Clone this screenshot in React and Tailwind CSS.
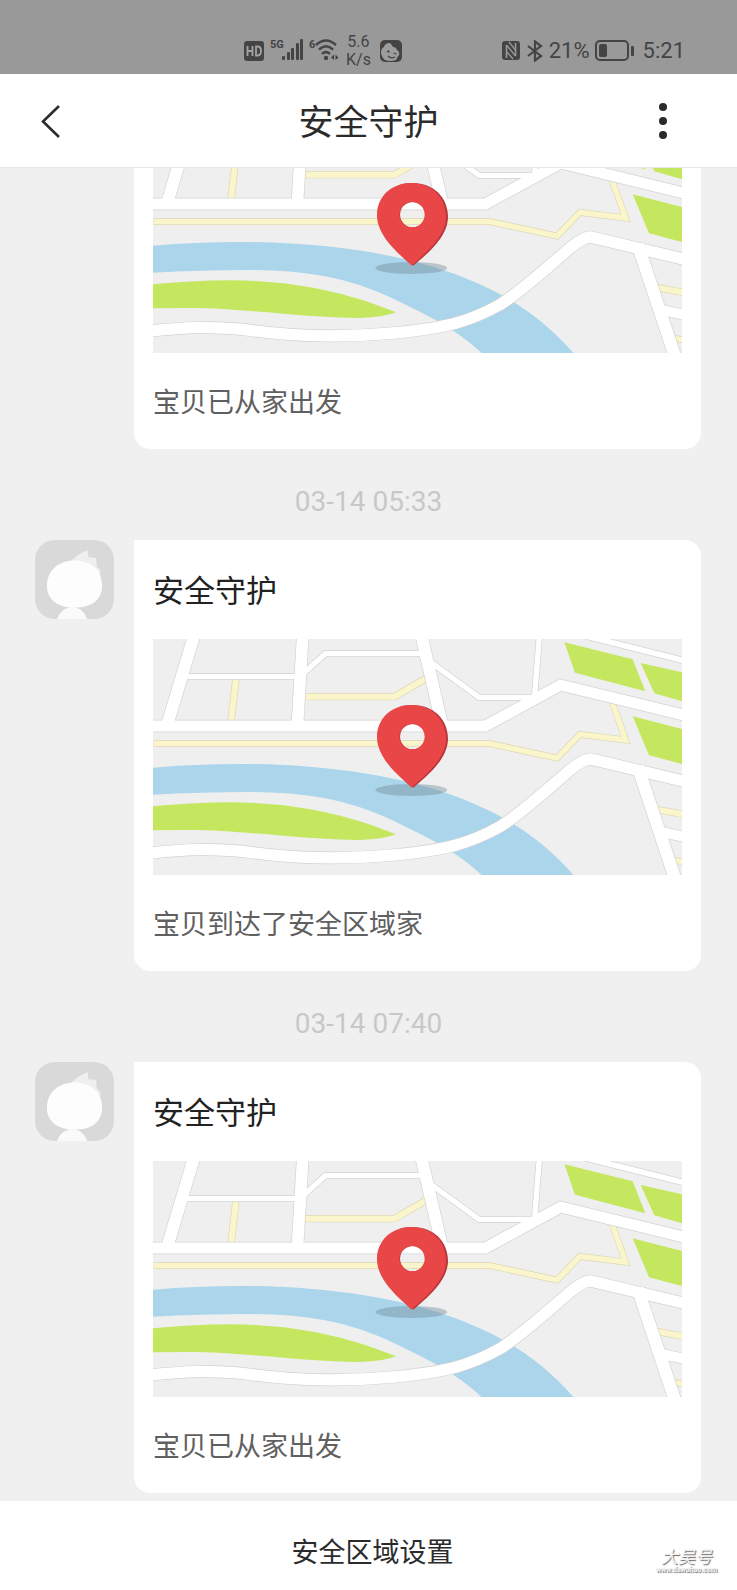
import React from 'react';

const messages = [
  { id: 1, time: null, title: '安全守护', text: '宝贝已从家出发' },
  { id: 2, time: '03-14 05:33', title: '安全守护', text: '宝贝到达了安全区域家' },
  { id: 3, time: '03-14 07:40', title: '安全守护', text: '宝贝已从家出发' },
];

// [path, width]
const whiteRoads = [
  ['M165 7 L80 290', 36],
  ['M125 140 H470', 16],
  ['M489 7 L472 290', 35],
  ['M484 136 L556 71 H860', 16],
  ['M842 7 L907 288', 36],
  ['M866 92 L1017 202 H1190', 16],
  ['M1199 7 L1183 208', 16],
  ['M1290 6 L1636 93', 17],
  ['M19 288 H1036 L1262 165 L1646 259', 33],
  ['M19 670 C120 660 220 652 330 667 S600 690 760 675 S990 640 1080 590 C1150 545 1220 480 1290 420 Q1330 387 1352 387 L1646 457', 34],
  ['M1493 410 L1605 745', 37],
  ['M1558 604 L1646 624', 30],
];

const yellowRoads = [
  ['M288 146 L273 275', 18],
  ['M490 200 H764 L870 138', 18],
  ['M41 341 H1050 L1251 384 L1320 313 L1457 330 L1414 210', 16],
  ['M1548 538 L1646 556', 18],
  ['M1600 690 L1646 699', 16],
];

const Roads = ({ roads, line, fill }) => (
  <g fill="none">
    {roads.map(([d, width]) => (
      <path key={d} d={d} stroke={line} strokeWidth={width + 4} />
    ))}
    {roads.map(([d, width]) => (
      <path key={d} d={d} stroke={fill} strokeWidth={width} />
    ))}
  </g>
);

const MapPicture = () => {
  return (
    <svg viewBox="39 27 1587 708" className="block w-full" role="img" aria-label="地图">
      <rect x="39" y="27" width="1587" height="708" fill="#efeff0" />
      <path
        fill="#aad5eb"
        d="M39 413 Q170 402 300 402 C560 402 780 440 920 490 C1080 545 1200 620 1300 735 L1025 735 C950 665 880 630 760 572 C620 505 480 486 330 486 Q180 486 39 494Z"
      />
      <path
        fill="#c5e75f"
        d="M39 529 Q180 517 270 517 C480 517 640 560 768 613 Q730 628 660 630 C500 630 300 600 150 600 L39 601Z"
      />
      <path
        fill="#c5e75f"
        d="M1273 37 L1478 88 L1516 184 L1305 128Z M1502 99 L1626 127 V214 L1543 190Z M1478 259 L1626 297 V402 L1527 376Z"
      />
      <Roads roads={yellowRoads} line="#dcd6b4" fill="#fbf5cb" />
      <Roads roads={whiteRoads} line="#d2d2d4" fill="#ffffff" />
      <ellipse cx="814" cy="480" rx="108" ry="18" fill="#6d8494" fillOpacity="0.4" />
      <path
        fill="#b9363a"
        fillRule="evenodd"
        d="M820 473 C792 448 713 390 713 322 C713 265 758 225 818 225 C880 225 924 268 924 326 C924 392 850 446 820 473Z M818 282 a38 38 0 1 0 0.1 0Z"
      />
      <path
        fill="#e94747"
        fillRule="evenodd"
        d="M815 473 C790 448 711 390 711 322 C711 265 755 225 814 225 C874 225 918 268 918 326 C918 392 842 446 815 473Z M816 282 a38 38 0 1 0 0.1 0Z"
      />
    </svg>
  );
};

const Avatar = () => {
  return (
    <svg viewBox="45 30 238 238" className="size-[79px] shrink-0 rounded-[20px] bg-[#d9d9d9]" aria-hidden="true">
      <path fill="#efefef" d="M150 98 Q170 72 204 61 L206 82 L229 84 L231 110 L243 122 L238 150Z" />
      <path fill="#fdfdfd" d="M81 168 C81 120 118 92 164 92 C214 92 247 122 247 168 C247 212 214 234 164 234 C116 234 81 212 81 168Z" />
      <path fill="#fafafa" d="M111 270 Q122 234 157 231 Q192 234 203 270Z" />
    </svg>
  );
};

const StatusBar = () => {
  return (
    <div className="flex h-[74px] shrink-0 items-center justify-between bg-[#999999] pt-7 pr-[52px] pl-[244px] text-[#444444]">
      <div className="flex items-center">
        <svg viewBox="0 0 20 20" className="size-5" aria-hidden="true">
          <rect width="20" height="20" rx="3" fill="#444444" />
          <path d="M3.500 5v10 M8.500 5v10 M3.500 10h5 M12 5.500v9h1.500q3.500 0 3.500-4.500t-3.500-4.500z" fill="none" stroke="#a4a4a4" strokeWidth="1.800" />
        </svg>
        <div className="ml-[6px] flex">
          <span className="h-6 w-3 text-[11px] leading-3 font-bold">5G</span>
          <svg viewBox="0 0 22 22" className="h-[22px] w-[22px]" aria-hidden="true">
            <g fill="#444444">
              <rect x="0" y="17" width="3" height="4" rx="1" />
              <rect x="5" y="13" width="3" height="8" rx="1" />
              <rect x="9" y="9" width="3" height="12" rx="1" />
              <rect x="14" y="4" width="3" height="17" rx="1" />
              <rect x="18" y="0" width="3" height="21" rx="1" />
            </g>
          </svg>
        </div>
        <div className="ml-[5px] flex">
          <span className="h-6 w-[6px] text-[11px] leading-3 font-bold">6</span>
          <svg viewBox="0 0 24 22" className="h-[22px] w-6" aria-hidden="true">
            <g fill="none" stroke="#444444" strokeWidth="2.400">
              <path d="M1 6 Q11 -3 21 6" />
              <path d="M4 10.500 Q11 4 18 10.500" />
              <path d="M7 15 Q11 11 15 15" />
            </g>
            <circle cx="11" cy="19" r="2.200" fill="#444444" />
            <path d="M16 18.500 L19 15.500 V21Z M23.500 18.500 L20.500 15.500 V21Z" fill="#444444" />
          </svg>
        </div>
        <div className="ml-[7px] text-center text-base leading-[18px]">
          <div>5.6</div>
          <div>K/s</div>
        </div>
        <svg viewBox="0 0 24 24" className="ml-2 size-6" aria-hidden="true">
          <rect x="1" y="1" width="22" height="22" rx="5" fill="#444444" />
          <path fill="#9d9d9d" d="M2 14 Q2 9 5 8 Q6 4 11 4 Q13 6 14 8 Q17 8 18 11 Q21 13 20 16 Q18 18 17 21 Q11 23 6 21 Q3 19 2 14Z" />
          <path d="M8 13l1.500-1 1 1.500 M14.500 14l3 1 M9 17q3 3 7 1" stroke="#444444" strokeWidth="1.300" fill="none" />
        </svg>
      </div>
      <div className="flex items-center text-[22px] leading-6">
        <svg viewBox="0 0 20 20" className="size-5" aria-hidden="true">
          <rect x="1" y="0" width="18" height="19" rx="3" fill="#444444" />
          <path d="M5.500 17 V4 M14.500 15 V2" fill="none" stroke="#999999" strokeWidth="1.600" />
          <path d="M5.500 4 L14.500 15 M8 1 L14 8.500 M6 11 L12 18" fill="none" stroke="#999999" strokeWidth="1.300" />
        </svg>
        <svg viewBox="0 0 16 22" className="ml-[6px] h-[22px] w-4" aria-hidden="true">
          <path d="M1 6 L14 16 L8 20.500 V1.500 L14 6 L1 16" fill="none" stroke="#444444" strokeWidth="2.200" />
        </svg>
        <span className="ml-[6px]">21%</span>
        <svg viewBox="0 0 40 22" className="ml-[5px] h-[22px] w-10" aria-hidden="true">
          <rect x="1" y="1" width="32" height="19" rx="4" fill="none" stroke="#444444" strokeWidth="2" />
          <rect x="4" y="4" width="8" height="13" rx="2" fill="#444444" />
          <rect x="36" y="6" width="3" height="10" rx="1" fill="#444444" />
        </svg>
        <span className="ml-2">5:21</span>
      </div>
    </div>
  );
};

const Header = () => {
  return (
    <header className="flex h-[94px] shrink-0 items-center justify-between border-b border-[#e8e8e8] bg-white px-[35px]">
      <button type="button" aria-label="返回" className="flex h-12 w-11 items-center">
        <svg viewBox="0 0 32 36" className="h-9 w-8" aria-hidden="true">
          <path d="M24 3 L8 18.500 L24 34" fill="none" stroke="#2b2b2b" strokeWidth="2.600" />
        </svg>
      </button>
      <h1 className="pt-[6px] text-[35px] leading-10 text-[#2b2b2b]">安全守护</h1>
      <button type="button" aria-label="更多" className="flex h-12 w-11 items-center">
        <svg viewBox="0 0 8 36" className="ml-px h-9 w-2" aria-hidden="true">
          <circle cx="4" cy="4" r="4" fill="#2b2b2b" />
          <circle cx="4" cy="18" r="4" fill="#2b2b2b" />
          <circle cx="4" cy="32" r="4" fill="#2b2b2b" />
        </svg>
      </button>
    </header>
  );
};

const Message = ({ time, title, text }) => {
  return (
    <li>
      {time && (
        <time className="block pt-[37px] pb-[22px] text-center text-[28px] leading-8 text-[#c8c8c8]">{time}</time>
      )}
      <div className="flex items-start gap-5 pr-9 pl-[35px]">
        <Avatar />
        <article className="min-w-0 flex-1 rounded-2xl rounded-tl-none bg-white px-[19px]">
          <h2 className="pt-8 pb-[27px] text-[31px] leading-10 text-[#222222]">{title}</h2>
          <MapPicture />
          <p className="pt-[34px] pb-[30px] text-[27px] leading-8 text-[#606060]">{text}</p>
        </article>
      </div>
    </li>
  );
};

export default function App() {
  return (
    <div className="flex h-screen flex-col bg-[#f0f0f1] font-[Roboto,'Noto_Sans_CJK_SC',sans-serif]">
      <StatusBar />
      <Header />
      {/* reversed column keeps the list scrolled to the newest message */}
      <main className="flex min-h-0 flex-1 flex-col-reverse overflow-y-auto pb-2 [scrollbar-width:none]">
        <ul>
          {messages.map((message) => (
            <Message key={message.id} time={message.time} title={message.title} text={message.text} />
          ))}
        </ul>
      </main>
      <footer className="relative shrink-0 bg-white">
        <button type="button" className="block w-full pt-9 pb-[21px] pl-2 text-center text-[27px] leading-8 text-[#2b2b2b]">
          安全区域设置
        </button>
        <div className="absolute right-5 bottom-4 text-center text-[#f4f4f4] text-shadow-[1px_1px_1px_#666666]">
          <div className="text-[17px] leading-[18px] italic">大吴号</div>
          <div className="text-[7px] leading-[8px] font-bold">www.dawuhao.com</div>
        </div>
      </footer>
    </div>
  );
}
